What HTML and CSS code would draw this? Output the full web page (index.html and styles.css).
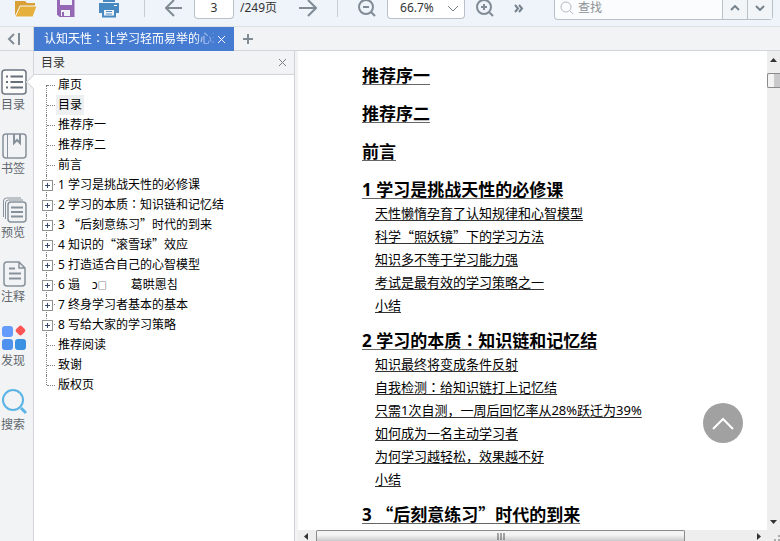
FILE: index.html
```html
<!DOCTYPE html>
<html lang="zh-CN">
<head>
<meta charset="utf-8">
<title>认知天性</title>
<link rel="stylesheet" href="styles.css">
</head>
<body>
<header class="toolbar">
  <div class="files">
    <button class="tool" aria-label="打开"><svg width="24" height="18"><path d="M1 16V1h3l1 0h6l2 2h8v4H7z" fill="#d9a036"/><path d="M1 17 6 6h17l-4 11z" fill="#e5b13c" stroke="#f4f7fa" stroke-width="1"/></svg></button>
    <button class="tool" aria-label="保存"><svg width="20" height="18"><path d="M1 0h17.500v17H3.500L1 14.500z" fill="#9468b4"/><path d="M4 0h12v5H4z" fill="#f0f4f9"/><path d="M5 10h9v6H5z" fill="#f0f4f9"/><path d="M6 12h2v4H6z" fill="#9468b4"/></svg></button>
    <button class="tool" aria-label="打印"><svg width="22" height="18"><path d="M5 0h12v2H5zM1 3h20v10h-3V9H4v4H1z" fill="#4789c0"/><path d="M16 5h3v1h-3z" fill="#fff"/><path d="M5 9h12v7.500H5z" fill="#f0f4f9" stroke="#4789c0" stroke-width="2"/><path d="M8 11.500h6M8 14h6" stroke="#4789c0" stroke-width="1"/></svg></button>
  </div>
  <span class="divider"></span>
  <div class="pager">
    <button class="tool" aria-label="上一页"><svg width="18" height="18" class="line"><path d="M17 8H2M9 0 1 8l8 8"/></svg></button>
    <label class="page"><input class="field" type="text" value="3" aria-label="页码">/249页</label>
    <button class="tool" aria-label="下一页"><svg width="18" height="18" class="line"><path d="M0 8h16M9 0l8 8-8 8"/></svg></button>
  </div>
  <span class="divider"></span>
  <div class="zoom">
    <button class="tool" aria-label="缩小"><svg width="20" height="18" class="line"><circle cx="9" cy="7" r="7"/><path d="M6 7h6M14 12l4 4"/></svg></button>
    <span class="combo"><select aria-label="缩放"><option>66.7%</option></select><svg width="12" height="8" class="thin"><path d="m1 1 5 5 5-5"/></svg></span>
    <button class="tool" aria-label="放大"><svg width="20" height="18" class="line"><circle cx="9" cy="7" r="7"/><path d="M6 7h6M9 4v6M14 12l4 4"/></svg></button>
  </div>
  <button class="tool more" aria-label="更多"><svg width="10" height="9" class="thin"><path d="m1 1 3 3.500L1 8M5 1l3 3.500L5 8"/></svg></button>
  <div class="search">
    <svg width="14" height="14" class="glass"><circle cx="6" cy="6" r="5"/><path d="m10 10 3 3"/></svg>
    <input type="text" placeholder="查找" aria-label="查找">
    <button aria-label="上一个"><svg width="10" height="6" class="thin"><path d="m1 5 4-4 4 4"/></svg></button>
    <button aria-label="下一个"><svg width="10" height="6" class="thin"><path d="m1 1 4 4 4-4"/></svg></button>
  </div>
</header>

<div class="tabs">
  <button class="collapse" aria-label="收起"><svg width="14" height="12" class="line"><path d="M7 1 2 6l5 5M12 0v12"/></svg></button>
  <div class="tab"><span class="name">认知天性<span class="colon" lang="zh-TW">：</span>让学习轻而易举的心理</span><button aria-label="关闭标签"><svg width="7" height="7"><path d="m0 0 7 7M7 0 0 7" stroke="#fff"/></svg></button></div>
  <button class="add" aria-label="新标签"><svg width="10" height="10" class="line"><path d="M5 0v10M0 5h10"/></svg></button>
</div>

<main class="workspace">
  <nav class="rail">
    <button class="mode current"><svg width="26" height="28"><rect x="1" y="2" width="24" height="24" rx="3" fill="#fcfcfd" stroke="#6d7680" stroke-width="1.500"/><path d="M5 8.500h2M5 14h2M5 19.500h2M9.500 8.500H22M9.500 14H22M9.500 19.500H22" stroke="#65707b" stroke-width="2"/></svg>目录</button>
    <button class="mode"><svg width="26" height="28"><rect x="2" y="2" width="23" height="24" rx="3" fill="none" stroke="#87919b" stroke-width="1.500"/><path d="M6.500 2v24" stroke="#87919b"/><path d="M13 2v9l3-3 3 3V2" fill="none" stroke="#87919b" stroke-width="2"/></svg>书签</button>
    <button class="mode"><svg width="26" height="28" fill="none" stroke="#87919b"><path d="M2.500 21V5q0-3 3-3H20M4.500 23V7q0-3 3-3H22"/><rect x="7" y="6" width="18" height="20" rx="3" stroke-width="1.500"/><path d="M10 11.500h12M10 16h12M10 20.500h12" stroke-width="2"/></svg>预览</button>
    <button class="mode"><svg width="26" height="28" fill="none" stroke="#87919b" stroke-width="1.500"><path d="M18 2H6Q3 2 3 5v18q0 3 3 3h15q3 0 3-3V8zV8h6"/><path d="M8 8.500h6M8 13.500h12M8 18.500h12" stroke-width="2"/></svg>注释</button>
    <button class="mode"><svg width="26" height="28"><rect x="1" y="2" width="11" height="11" rx="3" fill="#659bfa"/><rect x="1" y="15" width="11" height="11" rx="3" fill="#4f91ee"/><rect x="14" y="15" width="11" height="11" rx="3" fill="#3b91e1"/><rect x="15.500" y="2.500" width="8" height="8" rx="2" transform="rotate(45 19.500 6.500)" fill="#fb5554"/></svg>发现</button>
    <button class="mode"><svg width="26" height="28" fill="none" stroke="#5bb4e6"><circle cx="12" cy="12" r="10" stroke-width="2"/><path d="m20 20 5 5" stroke-width="3"/></svg>搜索</button>
  </nav>

  <section class="outline">
    <header class="panel-head"><h1>目录</h1><button aria-label="关闭"><svg width="7" height="7"><path d="m0 0 7 7M7 0 0 7" stroke="#757d85"/></svg></button></header>
    <ul class="tree">
      <li><a>扉页</a></li>
      <li><a class="selected">目录</a></li>
      <li><a>推荐序一</a></li>
      <li><a>推荐序二</a></li>
      <li><a>前言</a></li>
      <li class="branch"><a>1 学习是挑战天性的必修课</a></li>
      <li class="branch"><a>2 学习的本质<span class="colon" lang="zh-TW">：</span>知识链和记忆结</a></li>
      <li class="branch"><a>3 <span class="quote">“</span>后刻意练习<span class="quote">”</span>时代的到来</a></li>
      <li class="branch"><a>4 知识的<span class="quote">“</span>滚雪球<span class="quote">”</span>效应</a></li>
      <li class="branch"><a>5 打造适合自己的心智模型</a></li>
      <li class="branch"><a>6 遢　ɔ<span class="box">□</span>　　葛晎慁침</a></li>
      <li class="branch"><a>7 终身学习者基本的基本</a></li>
      <li class="branch"><a>8 写给大家的学习策略</a></li>
      <li><a>推荐阅读</a></li>
      <li><a>致谢</a></li>
      <li><a>版权页</a></li>
    </ul>
  </section>

  <section class="viewer">
    <article class="sheet">
      <h2><a href="#">推荐序一</a></h2>
      <h2><a href="#">推荐序二</a></h2>
      <h2><a href="#">前言</a></h2>
      <section>
        <h2><a href="#">1 学习是挑战天性的必修课</a></h2>
        <ul>
          <li><a href="#">天性懒惰孕育了认知规律和心智模型</a></li>
          <li><a href="#">科学<span class="quote">“</span>照妖镜<span class="quote">”</span>下的学习方法</a></li>
          <li><a href="#">知识多不等于学习能力强</a></li>
          <li><a href="#">考试是最有效的学习策略之一</a></li>
          <li><a href="#">小结</a></li>
        </ul>
      </section>
      <section>
        <h2><a href="#">2 学习的本质<span class="colon" lang="zh-TW">：</span>知识链和记忆结</a></h2>
        <ul>
          <li><a href="#">知识最终将变成条件反射</a></li>
          <li><a href="#">自我检测<span class="colon" lang="zh-TW">：</span>给知识链打上记忆结</a></li>
          <li><a href="#">只需1次自测，一周后回忆率从28%跃迁为39%</a></li>
          <li><a href="#">如何成为一名主动学习者</a></li>
          <li><a href="#">为何学习越轻松，效果越不好</a></li>
          <li><a href="#">小结</a></li>
        </ul>
      </section>
      <h2><a href="#">3 <span class="quote">“</span>后刻意练习<span class="quote">”</span>时代的到来</a></h2>
    </article>
    <div class="vbar"><svg width="7" height="4"><path d="M0 4 3.500 0 7 4z" fill="#333"/></svg><span class="thumb"></span><svg width="7" height="4"><path d="M0 0h7L3.500 4z" fill="#333"/></svg></div>
    <div class="hbar"><svg width="4" height="7"><path d="M4 0v7L0 3.500z" fill="#333"/></svg><span class="thumb"><svg width="8" height="7"><path d="M1 0v7M4 0v7M7 0v7" stroke="#555"/></svg></span><svg width="4" height="7"><path d="M0 0v7l4-3.500z" fill="#333"/></svg></div>
    <div class="grip"><svg width="6" height="6" fill="#aaa"><path d="M4 0h2v2H4zM0 4h2v2H0zM4 4h2v2H4z"/></svg></div>
    <button class="top" aria-label="回到顶部"><svg width="22" height="13"><path d="m1 12 10-10 10 10" fill="none" stroke="#fff" stroke-width="2"/></svg></button>
  </section>
</main>
</body>
</html>
```
FILE: styles.css
```css
* { box-sizing: border-box; }
body {
  margin: 0;
  height: 100vh;
  display: flex;
  flex-direction: column;
  overflow: hidden;
  background: #f2f3f5;
  color: #000;
  font: 12px/20px "Noto Sans", "Noto Sans CJK SC", sans-serif;
}
button, input, select { margin: 0; padding: 0; border: 0; background: none; color: inherit; font: inherit; }
button { display: flex; align-items: center; justify-content: center; }
svg { display: block; flex: none; }
h1, h2, ul { margin: 0; padding: 0; font-weight: normal; }
ul { list-style: none; }
.line { fill: none; stroke: #808b96; stroke-width: 2; }
.thin { fill: none; stroke: #76828d; stroke-width: 1; }
.quote { font-family: "Noto Sans CJK SC", sans-serif; line-height: 1; }
.colon { font-family: "Noto Sans CJK TC", sans-serif; line-height: 1; }
.box { font-size: 9px; line-height: 1; }

.toolbar {
  flex: none;
  display: flex;
  align-items: flex-start;
  height: 27px;
  padding: 0 7px 0 14px;
  background: #eef4f9;
  border-bottom: 1px solid #dde1e5;
  color: #333;
}
.tool { flex: none; }
.files { display: flex; gap: 20px; padding-right: 24px; }
.files .tool:first-child { margin-right: -2px; }
.files .tool:last-child { margin-left: 2px; }
.divider { flex: none; width: 1px; height: 17px; background: #c8cdd3; }
.pager, .page, .zoom { flex: none; display: flex; align-items: flex-start; }
.pager { gap: 11px; padding: 0 20px; }
.page { gap: 6px; line-height: 16px; white-space: nowrap; }
.field { width: 40px; height: 19px; padding-bottom: 3px; background: #fff; border: 1px solid #b9c0c8; border-top: 0; border-radius: 0 0 4px 4px; text-align: center; }
.pager .tool:last-child { margin-left: 11px; }
.zoom { gap: 10px; padding-left: 19px; }
.combo { position: relative; }
.combo select { display: block; appearance: none; width: 78px; height: 19px; padding: 0 0 3px 12px; line-height: 16px; background: #fff; border: 1px solid #b9c0c8; border-top: 0; border-radius: 0 0 4px 4px; }
.combo svg { position: absolute; right: 6px; top: 5px; pointer-events: none; }
.more { margin: 4px 30px 0 19px; }
.more .thin { stroke-width: 2; }
.search { flex: 1; min-width: 0; display: flex; height: 20px; background: #fafcfd; border: 1px solid #b9c0c8; border-top: 0; border-radius: 0 0 4px 4px; }
.search input { flex: 1; min-width: 0; padding: 0 0 4px 4px; }
.search input::placeholder { color: #8d9196; }
.search button { flex: none; width: 25px; padding-bottom: 3px; border-left: 1px solid #b9c0c8; background: #f2f5f8; }
.search button .thin { stroke-width: 2; }
.glass { margin: 1px 0 0 5px; fill: none; stroke: #b4bac0; }

.tabs { flex: none; display: flex; height: 24px; border-bottom: 1px solid #d3d5d8; }
.collapse { width: 34px; padding-right: 6px; border-right: 1px solid #d3d5d8; }
.tab { display: flex; align-items: center; gap: 4px; width: 200px; height: 24px; padding: 0 9px 0 10px; background: #467bd2; color: #fff; }
.name { flex: 1; overflow: hidden; white-space: nowrap; mask-image: linear-gradient(to right, #000 88%, rgb(0 0 0 / 25%)); }
.add { width: 28px; }

.workspace { flex: 1; min-height: 0; display: flex; }
.rail { flex: none; width: 34px; display: flex; flex-direction: column; gap: 16px; padding-top: 16px; border-right: 1px solid #d3d5d8; color: #60666c; }
.mode { position: relative; flex-direction: column; align-items: flex-start; height: 48px; line-height: 18px; padding-left: 1px; }
.current::after { content: ""; position: absolute; right: -5px; top: 10px; width: 9px; height: 9px; background: #fff; border: solid #d3d5d8; border-width: 0 0 1px 1px; transform: rotate(45deg); }

.outline { flex: none; width: 261px; background: #fff; border-right: 1px solid #cfd1d4; }
.panel-head { display: flex; align-items: center; justify-content: space-between; height: 24px; padding: 0 8px 0 7px; background: #f2f3f5; border-bottom: 1px solid #d3d5d8; color: #333; }
.panel-head h1 { font-size: 12px; }
.tree { margin-left: 12px; }
.tree li { position: relative; height: 20px; padding-left: 10px; white-space: pre; }
.tree a { display: inline-block; padding: 0 2px; }
.tree .selected { background: #eeeff0; }
.tree li::before { content: ""; position: absolute; left: 0; top: 0; bottom: 0; border-left: 1px dotted #808080; }
.tree li:first-child::before { top: 10px; }
.tree li:last-child::before { bottom: 10px; }
.tree li::after { content: ""; position: absolute; left: 1px; top: 10px; width: 8px; border-top: 1px dotted #808080; }
.tree .branch { background: linear-gradient(to right, #808080 50%, transparent 50%) 5px 10px / 2px 1px repeat-x content-box; }
.tree .branch { background: none; }
.tree .branch::after {
  left: -4px;
  top: 5px;
  width: 9px;
  height: 9px;
  border: 1px solid #919191;
  background: linear-gradient(#35476e, #35476e) center / 5px 1px no-repeat, linear-gradient(#35476e, #35476e) center / 1px 5px no-repeat, #fff;
}
.tree .branch a::before { content: ""; position: absolute; left: 6px; top: 9px; width: 3px; border-top: 1px dotted #808080; }

.viewer { position: relative; flex: 1; min-width: 0; display: grid; grid-template: minmax(0, 1fr) 11px / minmax(0, 1fr) 13px; padding-left: 3px; }
.sheet { overflow: hidden; display: flex; flex-direction: column; gap: 10px; padding: 11px 0 0 64px; background: #fff; }
.sheet h2 { flex: none; height: 28px; font-size: 17px; font-weight: bold; line-height: 28px; }
.sheet section { flex: none; }
.sheet ul { margin-top: -2px; padding-left: 13px; font-size: 13px; line-height: 23px; }
.sheet li { height: 23px; }
.sheet a { color: #000; text-decoration: underline 1px #333; text-underline-offset: 2px; text-decoration-skip-ink: none; }
.sheet h2 a { text-decoration-color: #666; }
.vbar { display: flex; flex-direction: column; align-items: center; background: #eee; padding: 7px 0 6px; }
.vbar .thumb { align-self: stretch; height: 15px; margin: 11px 0 auto; border: 1px solid #8b8b8b; border-right: 0; border-radius: 2px 0 0 2px; background: linear-gradient(to right, #f4f4f4 45%, #c9c9cb 55%); }
.hbar { display: flex; align-items: center; padding: 2px 6px 0; background: #eee; }
.hbar .thumb { flex: 0 1 369px; align-self: stretch; display: flex; justify-content: center; align-items: center; margin: -2px auto 0 8px; border: 1px solid #8b8b8b; border-bottom: 0; border-radius: 2px 2px 0 0; background: linear-gradient(#f4f4f4 40%, #c9c9cb); }
.grip { display: flex; align-items: flex-end; justify-content: flex-end; background: #eee; }
.top { position: absolute; right: 37px; bottom: 98px; width: 40px; height: 40px; border-radius: 50%; background: #a1a1a1; }
```
